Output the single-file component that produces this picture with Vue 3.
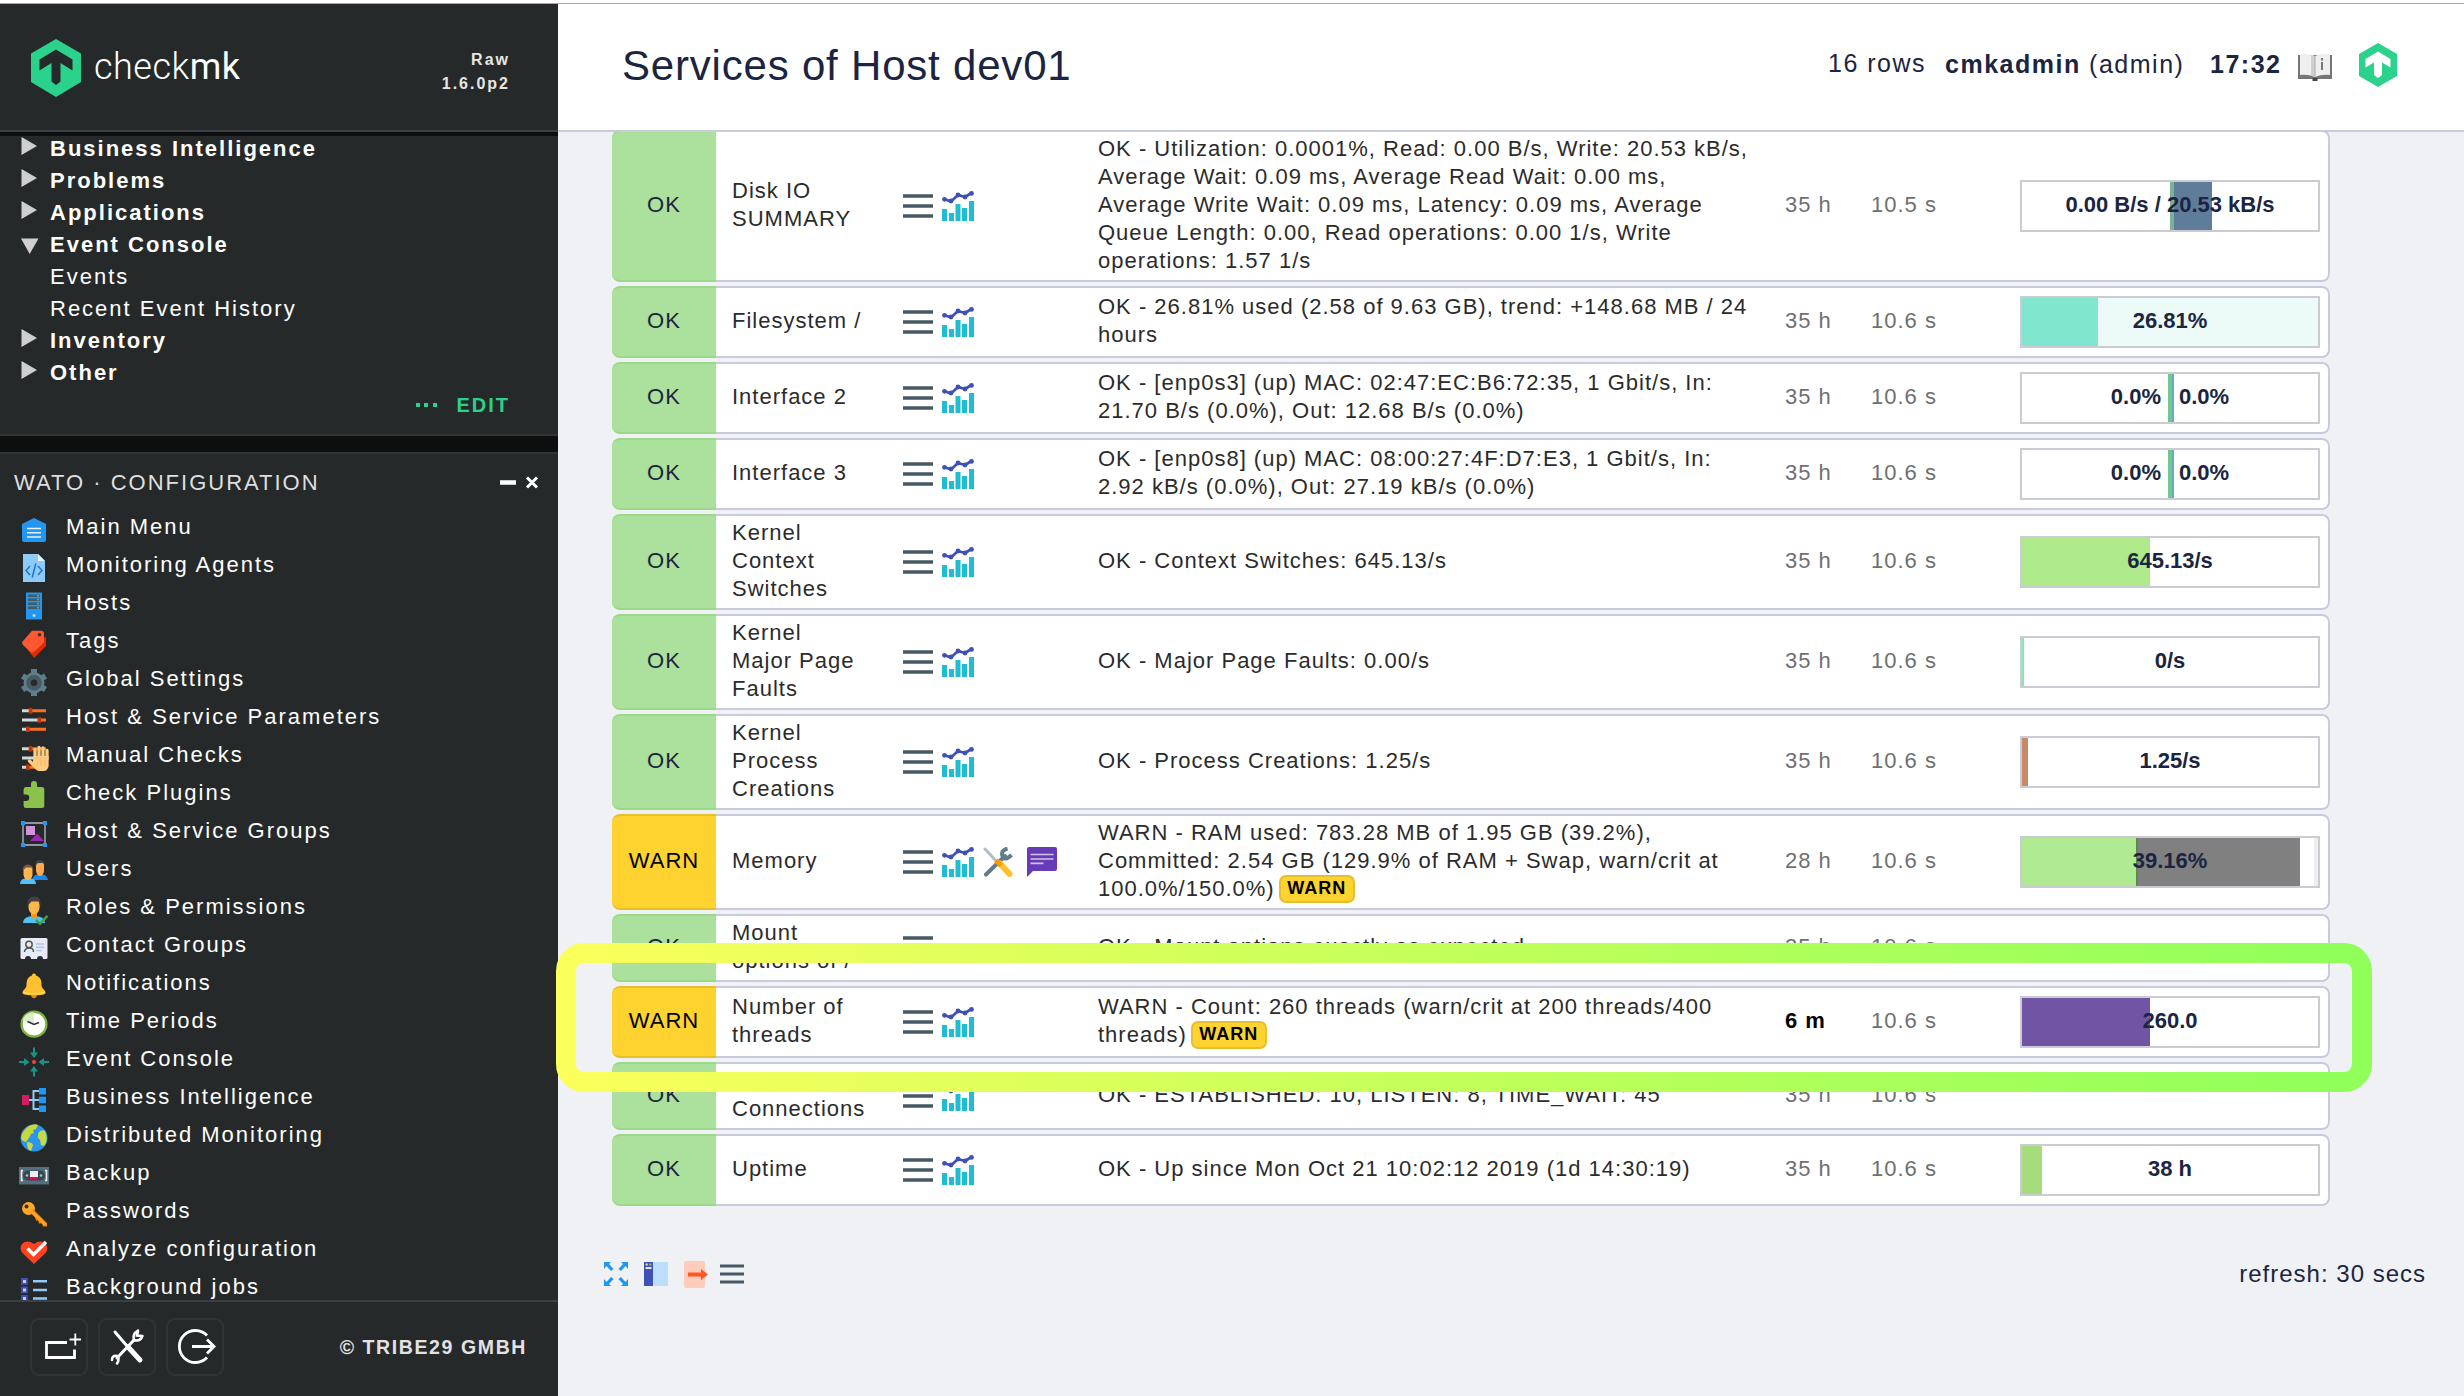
<script setup>
const tree = [
  { label: 'Business Intelligence', kind: 'closed' },
  { label: 'Problems', kind: 'closed' },
  { label: 'Applications', kind: 'closed' },
  { label: 'Event Console', kind: 'open' },
  { label: 'Events', kind: 'leaf' },
  { label: 'Recent Event History', kind: 'leaf' },
  { label: 'Inventory', kind: 'closed' },
  { label: 'Other', kind: 'closed' },
]

const sliders = '<g stroke-width="3"><path stroke="#cfd8dc" d="M4 6.7h8M4 16h17M4 25.3h5"/><path stroke="#ff6d1f" d="M13 6.7h15M22 16h6M10 25.3h18"/><path stroke="#bf360c" stroke-width="3.6" d="M12.5 4v5.4M21.3 13.3v5.4M9.8 22.6V28"/></g>'

const wato = [
  ['Main Menu', '<path fill="#2196f3" d="M16 4l12 6v16a2 2 0 0 1-2 2H6a2 2 0 0 1-2-2V10z"/><path stroke="#e3f2fd" stroke-width="1.5" d="M9 14.5h14M9 18.8h14M9 23h14"/>'],
  ['Monitoring Agents', '<path fill="#90caf9" d="M5 2h15l7 7v21H5z"/><path fill="#e1f5fe" d="M20 2v7h7z"/><path stroke="#1976d2" stroke-width="1.5" fill="none" d="M12 14l-4 4.5 4 4.5M20 14l4 4.5-4 4.5M17.8 11.500l-3.600 14"/>'],
  ['Hosts', '<path fill="#2196f3" d="M8 2.500h16v27H8z"/><path fill="#455a64" d="M10 4.500h12v2.500H10zM10 8.500h12V11H10zM10 12.500h12V15H10zM10 16.500h12V19H10z"/><path stroke="#8bc34a" stroke-width="1.5" stroke-dasharray="1.5 2.500" d="M20 5v14"/><circle cx="16" cy="25.500" r="1.500" fill="#bbdefb"/>'],
  ['Tags', '<path fill="#dd2c00" d="M28 9v9L16 30l-9-12z"/><path fill="#ff5730" d="M14 2.700h9a3 3 0 0 1 3 3V14c0 1-10 10-10 10s-2 1.500-4-.5L5 17c-1.500-2-1-3 0-4z"/><circle cx="21.500" cy="6.700" r="1.800" fill="#37302f"/>'],
  ['Global Settings', '<g stroke="#607d8b" stroke-width="6"><path d="M16 3v27M4.500 10l23 13.500M4.500 23.500l23-13.500"/></g><circle cx="16" cy="16.800" r="10.500" fill="#607d8b"/><circle cx="16" cy="16.800" r="5.500" fill="#262929" stroke="#455a64" stroke-width="4.500"/>'],
  ['Host & Service Parameters', sliders],
  ['Manual Checks', sliders + '<g stroke="#ffcc80" stroke-width="3.300" stroke-linecap="round" fill="none"><path d="M17 16V7.500M21 15V5.300M25 15V6M29 17V8.500M11.500 19l5 5"/></g><path fill="#ffcc80" d="M15.400 14h15.200v10q-1 5-5 5h-4q-4 0-7-6z"/><path stroke="#f7b25c" stroke-width=".8" d="M19 15v9M23 15v9M27 15v9"/>'],
  ['Check Plugins', '<path fill="#8bc34a" d="M8 7h5V4a3 3 0 0 1 6 0v3h4.500A2.800 2.800 0 0 1 26.300 10v15.500a2.500 2.500 0 0 1-2.500 2.500H8.200a2.500 2.500 0 0 1-2.600-2.500V21H8a3.200 3.200 0 0 0 0-6.500H5.600V9.500A2.500 2.500 0 0 1 8 7z"/>'],
  ['Host & Service Groups', '<path fill="none" stroke="#b0bec5" stroke-width="1.300" d="M5 5h22v22H5z"/><path fill="#2196f3" d="M3 3h4v4H3zM25 3h4v4h-4zM3 25h4v4H3zM25 25h4v4h-4z"/><path fill="#ce93d8" d="M8 8h9v9H8z"/><path fill="#9c27b0" d="M19 15.500l7 7.500H12z"/>'],
  ['Users', '<path fill="#1e88e5" d="M14 24q1-6 8-6t8 6z"/><path fill="#ffa84f" d="M18 9q0-4 4-4t4 4v6q-1 5-4 5t-4-5z"/><path fill="#424242" d="M17 10q0-6 5-6t5 6l-2-3h-5z"/><path fill="#4fc3f7" d="M2 28q0-6 8-6t8 6z"/><path fill="#ffb74d" d="M5.500 14q0-4 4.500-4t4.500 4v5q-1 5-4.500 5t-4.500-5z"/><path fill="#795548" d="M4.500 15q0-6.500 5.500-6.500t5.500 6.500l-2-3.500H8z"/>'],
  ['Roles & Permissions', '<path fill="#4fc3f7" d="M5 29q0-7 11-7t11 7z"/><path fill="#ff9800" d="M13 19h6v4q-3 3-6 0z"/><path fill="#ffb74d" d="M10.500 8q0-4 5.500-4t5.500 4v6q-1 6-5.500 6t-5.500-6z"/><path fill="#424242" d="M9.500 12q-1-9 6.500-9.500t6.500 9.500l-2-4.500h-7z"/><path fill="none" stroke="#43a047" stroke-width="2.500" d="M18 26l4 3.800 7.500-8"/>'],
  ['Contact Groups', '<rect x="2.500" y="6" width="27" height="21" rx="1.500" fill="#e8eaf6"/><circle cx="11" cy="12.500" r="3.200" fill="#fbe4d5" stroke="#455a64" stroke-width="1.500"/><path fill="none" stroke="#455a64" stroke-width="1.500" d="M6.500 20q0-3.500 4.500-4t4.500 4"/><path stroke="#b3c5e8" stroke-width="1.500" d="M18 12h8M18 15.300h8M18 18.500h6"/><path fill="#262c3a" d="M7 27a3 3 0 0 1 6 0zM19 27a3 3 0 0 1 6 0z"/>'],
  ['Notifications', '<circle cx="16" cy="25.500" r="2.700" fill="#e08a10"/><path fill="#ffc12e" d="M16 3.500c2 0 2 2 2 2 5 1.500 5.500 6 5.500 9.500 0 4 4 4.500 4 8 0 1.500-5 2.300-11.500 2.300S4.500 24.500 4.500 23c0-3.500 4-4 4-8 0-3.500.5-8 5.500-9.500 0 0 0-2 2-2z"/><path fill="none" stroke="#ffe082" stroke-width="1.200" d="M5.500 22.500q10.500 2.500 21 0"/>'],
  ['Time Periods', '<circle cx="16" cy="16.200" r="12.400" fill="#fff" stroke="#7cb342" stroke-width="2.400"/><path fill="#dcedc8" d="M16 16.200L4.500 12A12 12 0 0 1 16 4.300z"/><path fill="none" stroke="#263238" stroke-width="1.600" d="M9.500 13.500l6.500 3 5-2"/>'],
  ['Event Console', '<g fill="#159588"><path d="M15 1.500h2v5h3L16 12l-4-5.500h3zM15 30.500h2v-5h3L16 20l-4 5.500h3zM1 15v2h5v3l5.500-4L6 12v3zM31 15v2h-5v3l-5.500-4L26 12v3z"/></g><circle cx="16" cy="16" r="2" fill="#f44336"/>'],
  ['Business Intelligence', '<path fill="none" stroke="#90caf9" stroke-width="2" d="M10 16h13M15.500 6v20M14.500 7H23M14.500 25H23"/><path fill="#d81b60" d="M4 11h7v10H4z"/><path fill="#2196f3" d="M21 4h7v6.500h-7zM21 12.800h7v6.500h-7zM21 21.500h7V28h-7z"/>'],
  ['Distributed Monitoring', '<circle cx="16" cy="16" r="13.500" fill="#2b95ee"/><path fill="#c6d93f" d="M11 4q6-3 9-1l-2 4-3 1 1 3-3 1-2 4-3 4q-5-1-5-5 2-7 8-11zM9 20q5 0 6 3l-2 6q-4-1-4-9zM21 10q3-3 6-1 4 9-1 15l-3-1-1-5q-4-3-1-8z"/>'],
  ['Backup', '<path fill="#546e7a" d="M1 7h30v17.500H1z"/><rect x="5" y="10.500" width="22" height="10" rx="5" fill="#37474f"/><path fill="none" stroke="#eceff1" stroke-width="1.600" d="M5 10.500H3.500v10H5M27 10.500h1.500v10H27"/><circle cx="9" cy="15.500" r="1.300" fill="#b0bec5"/><circle cx="23" cy="15.500" r="1.300" fill="#b0bec5"/><path fill="#eceff1" d="M12 11h8v7h-8z"/><path fill="#f50057" d="M12 17h8v2.500h-8z"/>'],
  ['Passwords', '<circle cx="10.500" cy="10.500" r="6.500" fill="#ffa726"/><path fill="#f57c00" d="M12 14l3-3 14 14v3.500h-4l-1-3h-3l-1-3h-2l-1-3z"/><path fill="none" stroke="#ffa726" stroke-width="3" d="M13 13l14.500 14"/><circle cx="8.500" cy="8.500" r="2" fill="#37302f"/>'],
  ['Analyze configuration', '<path fill="#ff4122" d="M16 28L4.500 17C-1 10 7 1 16 8c9-7 17 2 11.500 9z"/><path fill="none" stroke="#fff" stroke-width="3.400" d="M9.500 12.500l6 6L28 6"/>'],
  ['Background jobs', '<g fill="none" stroke="#3f51b5" stroke-width="2.300"><path d="M4.200 5.200h4.500v4.500H4.200zM4.200 13.700h4.500v4.500H4.200zM4.200 22.200h4.500v4.500H4.200z"/></g><path fill="#c5cae9" d="M5 6h3v3H5zM5 14.500h3v3H5zM5 23h3v3H5z"/><path stroke="#90caf9" stroke-width="2.400" d="M15 7.300h14M15 16h14M15 24.500h14"/>'],
]

const services = [
  { state: 'OK', name: ['Disk IO', 'SUMMARY'], age: '35 h', checked: '10.5 s',
    out: ['OK - Utilization: 0.0001%, Read: 0.00 B/s, Write: 20.53 kB/s,', 'Average Wait: 0.09 ms, Average Read Wait: 0.00 ms,', 'Average Write Wait: 0.09 ms, Latency: 0.09 ms, Average', 'Queue Length: 0.00, Read operations: 0.00 1/s, Write', 'operations: 1.57 1/s'],
    perf: '0.00 B/s / 20.53 kB/s', bars: [[148, '#fff'], [4, '#7bb194'], [38, '#5f7d9b']] },
  { state: 'OK', name: ['Filesystem /'], age: '35 h', checked: '10.6 s',
    out: ['OK - 26.81% used (2.58 of 9.63 GB), trend: +148.68 MB / 24', 'hours'],
    perf: '26.81%', bars: [[76, '#80e6cd'], [220, '#ecfbf8']] },
  { state: 'OK', name: ['Interface 2'], age: '35 h', checked: '10.6 s',
    out: ['OK - [enp0s3] (up) MAC: 02:47:EC:B6:72:35, 1 Gbit/s, In:', '21.70 B/s (0.0%), Out: 12.68 B/s (0.0%)'],
    perf: ['0.0%', '0.0%'], bars: [[146, '#fff'], [4, '#6cc98f'], [2, '#6aa9c4']] },
  { state: 'OK', name: ['Interface 3'], age: '35 h', checked: '10.6 s',
    out: ['OK - [enp0s8] (up) MAC: 08:00:27:4F:D7:E3, 1 Gbit/s, In:', '2.92 kB/s (0.0%), Out: 27.19 kB/s (0.0%)'],
    perf: ['0.0%', '0.0%'], bars: [[146, '#fff'], [4, '#6cc98f'], [2, '#6aa9c4']] },
  { state: 'OK', name: ['Kernel', 'Context', 'Switches'], age: '35 h', checked: '10.6 s',
    out: ['OK - Context Switches: 645.13/s'], perf: '645.13/s', bars: [[128, '#aeea8a']] },
  { state: 'OK', name: ['Kernel', 'Major Page', 'Faults'], age: '35 h', checked: '10.6 s',
    out: ['OK - Major Page Faults: 0.00/s'], perf: '0/s', bars: [[2, '#86e8ac']] },
  { state: 'OK', name: ['Kernel', 'Process', 'Creations'], age: '35 h', checked: '10.6 s',
    out: ['OK - Process Creations: 1.25/s'], perf: '1.25/s', bars: [[6, '#c88a66']] },
  { state: 'WARN', name: ['Memory'], age: '28 h', checked: '10.6 s', extra: true, badge: true,
    out: ['WARN - RAM used: 783.28 MB of 1.95 GB (39.2%),', 'Committed: 2.54 GB (129.9% of RAM + Swap, warn/crit at', '100.0%/150.0%)'],
    perf: '39.16%', bars: [[114, '#b0ea93'], [2, '#5c8a4b'], [162, '#808080'], [14, '#fff'], [4, '#eee']] },
  { state: 'OK', name: ['Mount', 'options of /'], age: '35 h', checked: '10.6 s', noGraph: true,
    out: ['OK - Mount options exactly as expected'] },
  { state: 'WARN', name: ['Number of', 'threads'], age: '6 m', recent: true, checked: '10.6 s', badge: true,
    out: ['WARN - Count: 260 threads (warn/crit at 200 threads/400', 'threads)'],
    perf: '260.0', bars: [[128, '#7155a5']] },
  { state: 'OK', name: ['TCP', 'Connections'], age: '35 h', checked: '10.6 s',
    out: ['OK - ESTABLISHED: 10, LISTEN: 8, TIME_WAIT: 45'] },
  { state: 'OK', name: ['Uptime'], age: '35 h', checked: '10.6 s',
    out: ['OK - Up since Mon Oct 21 10:02:12 2019 (1d 14:30:19)'],
    perf: '38 h', bars: [[20, '#a6dc7b']] },
]
</script>

<template>
  <div class="screen">
    <div class="topline"></div>
    <div class="body">
      <aside class="side">
        <header class="brand">
          <svg class="hex" viewBox="0 0 50 58">
            <path fill="#2ad28c" d="M25 0l25 14.500v28.500L25 58 0 43V14.500z" />
            <path fill="#262929" d="M25 10.500l16.500 10v11L29.500 24v18.500L25 46l-4.500-3.500V24L8.500 31.500v-11z" />
          </svg>
          <span class="word">check<b>mk</b></span>
          <span class="ver">Raw<br>1.6.0p2</span>
        </header>
        <div class="gap small"></div>
        <section class="snap views">
          <div v-for="t in tree" :key="t.label" class="node" :class="t.kind">
            <svg class="tri" viewBox="0 0 18 18">
              <path v-if="t.kind === 'closed'" d="M0.500 0L16 9 0.500 18z" />
              <path v-if="t.kind === 'open'" d="M0 1.500h17.500L8.700 17z" />
            </svg>
            <span>{{ t.label }}</span>
          </div>
          <div class="edit"><i></i><i></i><i></i><span>EDIT</span></div>
        </section>
        <div class="gap"></div>
        <section class="snap wato">
          <div class="head">
            <span>WATO · CONFIGURATION</span>
            <svg viewBox="0 0 40 14" width="40" height="14">
              <path stroke="#fff" stroke-width="4.500" d="M0 6.500h16" />
              <path stroke="#fff" stroke-width="3" d="M27 1.500l10 10M37 1.500l-10 10" />
            </svg>
          </div>
          <div v-for="w in wato" :key="w[0]" class="item">
            <svg viewBox="0 0 32 32" fill="none" v-html="w[1]"></svg>
            <span>{{ w[0] }}</span>
          </div>
        </section>
        <footer class="foot">
          <div class="btn">
            <svg viewBox="0 0 54 54" fill="none" stroke="#fff">
              <path stroke-width="2.800" d="M35 22.500H14.500v15h28v-8" />
              <path stroke-width="1.800" d="M37.500 19.500h11.500M43.300 13.500v12" />
            </svg>
          </div>
          <div class="btn">
            <svg viewBox="0 0 54 54" fill="none" stroke="#fff" stroke-linecap="round">
              <path stroke-width="3" d="M15 12l12 14M17 38l17-18" />
              <path stroke-width="5" d="M28 27l12 13" />
              <path stroke-width="2.600" d="M34 20q-2-6 4-9.500M34 20q6 2 8.500-4M38 10.500l-1 5 5.500 .5M17 36q-5-1-5 4M17 36q3 3 0 7.500" />
            </svg>
          </div>
          <div class="btn">
            <svg viewBox="0 0 54 54" fill="none" stroke="#fff" stroke-width="2.800">
              <path d="M39 15.500a16 16 0 1 0 0 22" />
              <path d="M24 26.500h21M39 19.500l7 7-7 7" />
            </svg>
          </div>
          <span class="copy">© TRIBE29 GMBH</span>
        </footer>
      </aside>

      <main class="main">
        <header class="top">
          <h1>Services of Host dev01</h1>
          <span class="rows">16 rows</span>
          <span class="user"><b>cmkadmin</b> (admin)</span>
          <b class="time">17:32</b>
          <svg class="book" viewBox="0 0 34 28">
            <path fill="#757575" d="M0 2h34v24H0z" />
            <path fill="#efefef" d="M2 1q8-1 15 2 7-3 15-2v21q-8-1-15 2-7-3-15-2z" />
            <path fill="#cfcfcf" d="M13 2l4 1.500V24l-4-1.500z" />
            <path stroke="#bbb" stroke-width="1.300" d="M17 3v21" />
            <path stroke="#777" stroke-width="2" d="M24 5v2.500M24 9v8" />
            <path fill="#444" d="M14.500 25h5v3h-5z" />
          </svg>
          <svg class="mini" viewBox="0 0 38 44">
            <path fill="#2ad28c" d="M19 0l19 11v22L19 44 0 33V11z" />
            <path fill="#fff" d="M19 8.500L31.500 16v8.500L23 19.500V32l-4 3-4-3V19.500L6.500 24.500V16z" />
          </svg>
        </header>

        <div class="content">
          <div class="table">
            <div v-for="s in services" :key="s.name.join()" class="row" :class="{ tall: s.perf }">
              <div class="state" :class="s.state.toLowerCase()"><span>{{ s.state }}</span></div>
              <div class="cells">
                <div class="name txt"><div v-for="n in s.name" :key="n">{{ n }}</div></div>
                <div class="icons">
                  <svg width="30" height="30" viewBox="0 0 30 30"><path stroke="#455a64" stroke-width="3.600" d="M0 5h30M0 15h30M0 25h30" /></svg>
                  <svg v-if="!s.noGraph" width="32" height="30" viewBox="0 0 32 30">
                    <path fill="#1fbcd2" d="M0 18h5v12H0zM7 22h5v8H7zM13.500 13h5v17h-5zM20 17h5v13h-5zM27 10h5v20h-5z" />
                    <path fill="none" stroke="#3f51b5" stroke-width="2.800" d="M2 8l7 2.500L16 4l7 2 6.500-4" />
                    <g fill="#3f51b5"><circle cx="2.500" cy="8.300" r="2.400" /><circle cx="9" cy="10" r="2.400" /><circle cx="16" cy="4" r="2.400" /><circle cx="23" cy="6" r="2.400" /><circle cx="29.500" cy="2.400" r="2.400" /></g>
                  </svg>
                  <template v-if="s.extra">
                    <svg width="30" height="30" viewBox="0 0 30 30" fill="none">
                      <path stroke="#b0bec5" stroke-width="3" stroke-linecap="round" d="M2 2l13 14" />
                      <path stroke="#607d8b" stroke-width="4" stroke-linecap="round" d="M3 27.500L22 9" />
                      <path stroke="#607d8b" stroke-width="4" d="M24.500 1.500q-7 2-5 7.500t9-1" />
                      <path stroke="#ffc02e" stroke-width="6" stroke-linecap="round" d="M17 16.500l9.500 10.500" />
                      <path stroke="#ff9800" stroke-width="5" d="M13 13.500l5 5" />
                    </svg>
                    <svg class="note" width="30" height="30" viewBox="0 0 30 30">
                      <path fill="#673ab7" d="M2 0h26a2 2 0 0 1 2 2v20a2 2 0 0 1-2 2H6l-6 6V2a2 2 0 0 1 2-2z" />
                      <path stroke="#d1c4e9" stroke-width="1.700" d="M3.500 7.500h23M3.500 12h23M3.500 16.300h13" />
                    </svg>
                  </template>
                </div>
                <div class="out txt">
                  <div v-for="(l, i) in s.out" :key="i">{{ l }}<span v-if="s.badge && i === s.out.length - 1" class="badge">WARN</span></div>
                </div>
                <div class="age txt" :class="{ recent: s.recent }">{{ s.age }}</div>
                <div class="checked txt">{{ s.checked }}</div>
                <div v-if="s.perf" class="perf">
                  <div class="bars">
                    <i v-for="(b, i) in s.bars" :key="i" :style="{ width: b[0] + 'px', background: b[1] }"></i>
                  </div>
                  <div v-if="Array.isArray(s.perf)" class="label halves"><span v-for="(p, i) in s.perf" :key="i">{{ p }}</span></div>
                  <div v-else class="label">{{ s.perf }}</div>
                </div>
              </div>
            </div>
          </div>

          <div class="tools">
            <svg width="24" height="24" viewBox="0 0 24 24" fill="#2196f3">
              <path d="M0 0h7L5 2l4.500 5L7 9 2.500 4 0 7zM24 0h-7l2 2-4.500 5L17 9l4.500-5L24 7zM0 24h7l-2-2 4.500-5L7 15l-4.500 5L0 17zM24 24h-7l2-2-4.500-5 2.500-2 4.500 5 2.500-3z" />
            </svg>
            <svg width="24" height="24" viewBox="0 0 24 24">
              <path fill="#3f51b5" d="M0 0h9v24H0z" /><path fill="#bbdefb" d="M9 0h15v24H9z" />
              <path fill="#e0e4f5" d="M1.500 5h6v2h-6z" /><circle cx="2.700" cy="2.500" r="1.200" fill="#ffd54f" /><circle cx="6.300" cy="2.500" r="1.200" fill="#8bc34a" />
            </svg>
            <svg width="24" height="27" viewBox="0 0 24 27">
              <rect width="21" height="27" rx="2" fill="#ffccbc" />
              <path fill="#ff5722" d="M4 11.500h13V8l7 5.500-7 5.500v-3.500H4z" />
            </svg>
            <svg class="burger" width="24" height="24" viewBox="0 0 24 24"><path stroke="#455a64" stroke-width="2.800" d="M0 4h24M0 12h24M0 20h24" /></svg>
            <span class="refresh">refresh: 30 secs</span>
          </div>
        </div>
      </main>
    </div>

    <svg class="marker" viewBox="0 0 1816 149">
      <defs>
        <linearGradient id="marker" x1="0" y1="0" x2="1" y2="0">
          <stop offset="0" stop-color="#fbff5c" />
          <stop offset="0.450" stop-color="#c8ff5a" />
          <stop offset="0.750" stop-color="#a8ff5a" />
          <stop offset="1" stop-color="#90ff5a" />
        </linearGradient>
      </defs>
      <rect x="10" y="10" width="1796" height="129" rx="18" fill="none" stroke="url(#marker)" stroke-width="20" />
    </svg>
  </div>
</template>

<style>
html, body { margin: 0; background: #fff; }
</style>

<style scoped>
.screen {
  position: relative;
  display: flex;
  flex-direction: column;
  width: 2464px;
  height: 1396px;
  overflow: hidden;
  font: 22px/28px "Liberation Sans", Arial, sans-serif;
  white-space: nowrap;
}
.topline { height: 3px; border-bottom: 1px solid #a9a9a9; background: #fff; flex: none; }
.body { display: flex; flex: 1; min-height: 0; }
svg { display: block; flex: none; }

.side { display: flex; flex-direction: column; width: 558px; background: #262929; color: #fff; flex: none; }
.brand { display: flex; align-items: flex-start; box-sizing: border-box; height: 128px; padding: 35px 48px 0 31px; border-bottom: 2px solid #3b4046; flex: none; }
.hex { width: 50px; height: 58px; }
.word { margin: 7px 0 0 13px; font: 300 36px/42px Roboto, sans-serif; letter-spacing: .5px; }
.word b { font-weight: 400; }
.ver { margin: 9px 0 0 auto; font-weight: bold; font-size: 16px; line-height: 24px; letter-spacing: 2px; text-align: right; color: #e6e6e6; }
.gap { height: 16px; background: #0d0f0f; flex: none; border: solid #303538; border-width: 2px 0; }
.gap.small { height: 4px; border: 0; }
.snap { overflow: hidden; letter-spacing: 2px; }
.views { height: 298px; flex: none; }
.node { display: flex; height: 32px; padding-left: 21px; line-height: 26px; }
.node.closed, .node.open { font-weight: bold; }
.tri { width: 18px; height: 18px; margin: 1px 11px 0 0; fill: #cfcfcf; }
.open .tri { margin-top: 5px; }
.edit { display: flex; justify-content: flex-end; align-items: center; padding-right: 48px; font-size: 20px; font-weight: bold; line-height: 26px; color: #2ad28c; }
.edit i { width: 4px; height: 4px; margin-right: 4.600px; background: #2ad28c; }
.edit span { margin-left: 15px; }
.wato { flex: 1; min-height: 0; }
.head { display: flex; justify-content: space-between; align-items: center; height: 58px; box-sizing: border-box; padding: 0 18px 1px 14px; color: #dfdfdf; }
.item { display: flex; align-items: center; height: 38px; padding-left: 18px; }
.item svg { width: 32px; height: 32px; margin-top: -2px; }
.item span { margin: -8px 0 0 16px; }
.foot { display: flex; align-items: center; box-sizing: border-box; height: 96px; padding: 0 31px 4px 30px; border-top: 2px solid #3b4046; gap: 10px; flex: none; }
.btn { box-sizing: border-box; width: 58px; height: 58px; border: 2px solid #303437; border-radius: 9px; }
.copy { margin-left: auto; font-weight: bold; font-size: 19.500px; letter-spacing: 1.600px; color: #e2e2e2; }

.main { display: flex; flex-direction: column; flex: 1; min-width: 0; background: #f0f1f4; color: #1b2541; }
.top { display: flex; align-items: flex-start; box-sizing: border-box; height: 128px; padding-left: 64px; border-bottom: 2px solid #c9cbdc; background: #fff; flex: none; position: relative; z-index: 1; font-size: 25px; letter-spacing: 1.500px; }
h1 { width: 1206px; margin: 38px 0 0; font-weight: normal; font-size: 42px; line-height: 48px; letter-spacing: .8px; }
.rows { width: 117px; margin-top: 45px; }
.user { width: 265px; margin-top: 46px; }
.time { width: 88px; margin-top: 46px; }
.book { width: 34px; height: 28px; margin-top: 49px; }
.mini { width: 38px; height: 44px; margin: 39px 0 0 27px; }

.content { padding-left: 54px; }
.table { display: flex; flex-direction: column; gap: 4px; width: 1718px; margin-top: -2px; }
.row { display: flex; min-height: 68px; }
.row.tall { min-height: 72px; }
.state { display: flex; align-items: center; justify-content: center; box-sizing: border-box; width: 104px; border: solid; border-width: 2px 0; border-radius: 8px 0 0 8px; letter-spacing: 1px; flex: none; }
.state span { margin: -1px 0 1px; }
.ok { background: #abe09d; border-color: #9ad986; }
.warn { background: #ffd32f; border-color: #e7be2b; color: #000; }
.cells { display: flex; align-items: center; flex: 1; box-sizing: border-box; padding: 4px 8px 4px 16px; border: 2px solid #c9cbdc; border-left: 0; border-radius: 0 8px 8px 0; background: #fff; }
.txt { letter-spacing: 1px; color: #2b2b2b; margin: -1px 0 1px; }
.name { width: 171px; }
.icons { display: flex; gap: 9px; width: 195px; }
.note { margin-left: 5px; }
.out { width: 687px; }
.cells .age { width: 86px; color: #6f6f6f; }
.cells .checked { width: 149px; color: #6f6f6f; }
.cells .recent { color: #000; font-weight: bold; }
.badge { display: inline-block; box-sizing: border-box; width: 76px; height: 28px; margin: -4px 0 -4px 4px; border: 2px solid #e7be2b; border-radius: 7px; background: #ffd32f; color: #000; font-weight: bold; font-size: 18px; line-height: 23px; text-align: center; vertical-align: 2px; }
.perf { position: relative; box-sizing: border-box; width: 300px; height: 52px; border: 2px solid #cbccd3; background: #fff; color: #1b2541; font-weight: bold; flex: none; }
.bars { display: flex; height: 48px; }
.label { position: absolute; inset: 0; line-height: 46px; text-align: center; }
.halves { display: flex; justify-content: center; gap: 18px; }

.tools { display: flex; align-items: center; width: 1822px; margin: 54px 0 0 -8px; }
.tools svg { margin-right: 16px; }
.tools .burger { margin-left: -4px; }
.refresh { margin-left: auto; font-size: 24px; letter-spacing: 1px; }

/* highlight laid over the table */
.marker { position: absolute; left: 556px; top: 943px; width: 1816px; height: 149px; }
</style>
